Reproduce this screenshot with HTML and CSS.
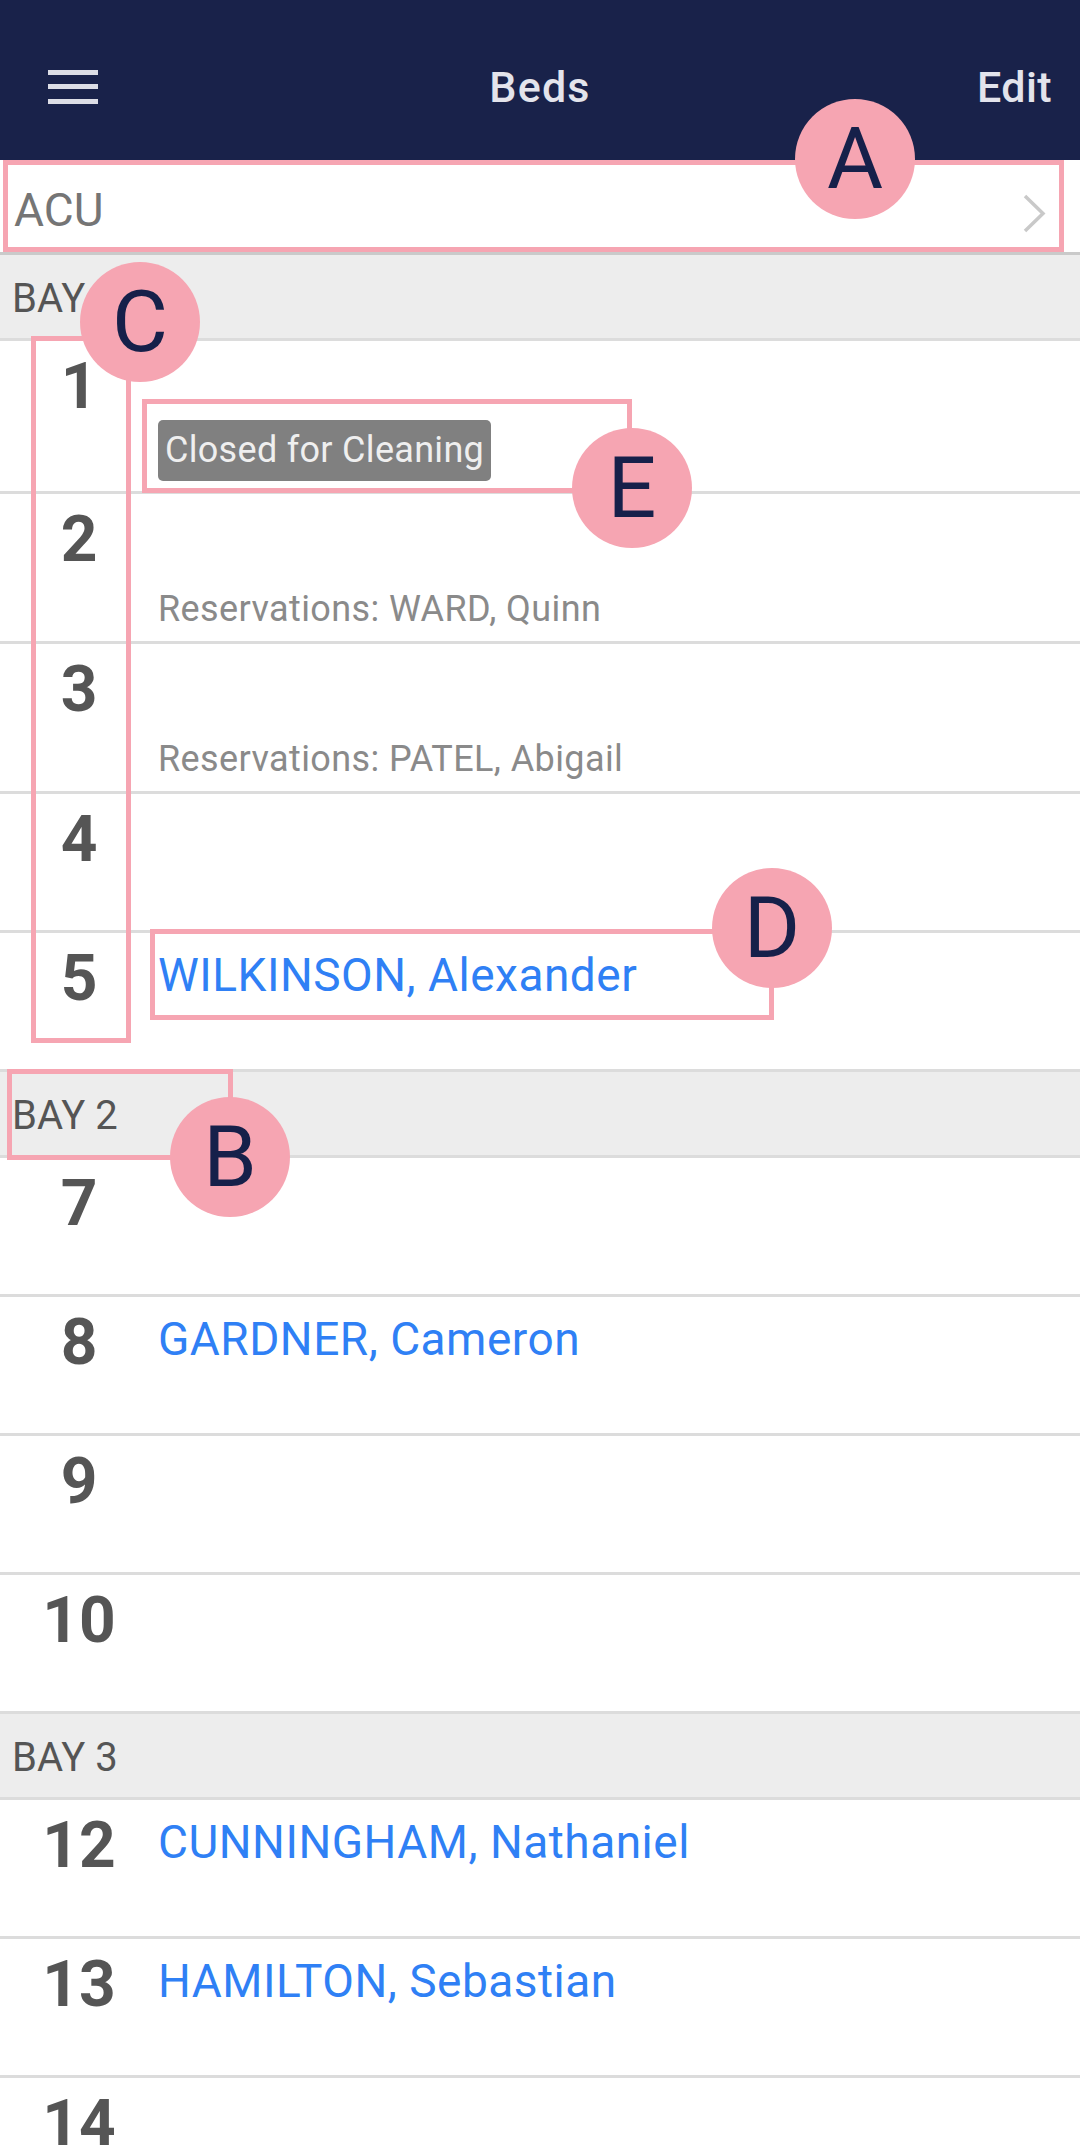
FILE: index.html
```html
<!DOCTYPE html>
<html lang="en">
<head>
<meta charset="utf-8">
<title>Beds</title>
<link rel="stylesheet" href="styles.css">
</head>
<body>
<header class="topbar">
  <div class="tb-left">
    <svg class="menu" width="50" height="34" viewBox="0 0 50 34"><rect x="0" y="0" width="50" height="5"/><rect x="0" y="14" width="50" height="5"/><rect x="0" y="29" width="50" height="5"/></svg>
  </div>
  <div class="tb-title">Beds</div>
  <div class="tb-right">Edit</div>
</header>

<div class="unit-row">
  <span class="unit">ACU</span>
  <svg class="chev" width="26" height="40" viewBox="0 0 26 40"><polyline points="3,2 21,19.5 3,37" fill="none" stroke="#c9c9c9" stroke-width="3.5"/></svg>
</div>

<section class="bay">
  <div class="bay-head">BAY 1</div>
  <div class="bed"><div class="num">1</div><div class="info"><div class="name"></div><span class="status">Closed for Cleaning</span></div></div>
  <div class="bed"><div class="num">2</div><div class="info"><div class="name"></div><div class="res">Reservations: WARD, Quinn</div></div></div>
  <div class="bed"><div class="num">3</div><div class="info"><div class="name"></div><div class="res">Reservations: PATEL, Abigail</div></div></div>
  <div class="bed"><div class="num">4</div><div class="info"><div class="name"></div></div></div>
  <div class="bed"><div class="num">5</div><div class="info"><div class="name">WILKINSON, Alexander</div></div></div>
</section>

<section class="bay">
  <div class="bay-head">BAY 2</div>
  <div class="bed"><div class="num">7</div><div class="info"><div class="name"></div></div></div>
  <div class="bed"><div class="num">8</div><div class="info"><div class="name">GARDNER, Cameron</div></div></div>
  <div class="bed"><div class="num">9</div><div class="info"><div class="name"></div></div></div>
  <div class="bed"><div class="num">10</div><div class="info"><div class="name"></div></div></div>
</section>

<section class="bay">
  <div class="bay-head">BAY 3</div>
  <div class="bed"><div class="num">12</div><div class="info"><div class="name">CUNNINGHAM, Nathaniel</div></div></div>
  <div class="bed"><div class="num">13</div><div class="info"><div class="name">HAMILTON, Sebastian</div></div></div>
  <div class="bed"><div class="num">14</div><div class="info"><div class="name"></div></div></div>
</section>

<div class="annot-box box-a"></div>
<div class="annot-box box-c"></div>
<div class="annot-box box-e"></div>
<div class="annot-box box-d"></div>
<div class="annot-box box-b"></div>
<div class="annot-dot dot-a">A</div>
<div class="annot-dot dot-c">C</div>
<div class="annot-dot dot-e">E</div>
<div class="annot-dot dot-d">D</div>
<div class="annot-dot dot-b">B</div>
</body>
</html>
```
FILE: styles.css
```css
* { box-sizing: border-box; }
html, body { margin: 0; padding: 0; }
body {
  width: 1080px;
  height: 2148px;
  overflow: hidden;
  position: relative;
  background: #ffffff;
  font-family: Roboto, "Noto Sans", "Liberation Sans", sans-serif;
}

.topbar {
  height: 160px;
  background: #19224a;
  display: grid;
  grid-template-columns: 1fr auto 1fr;
  padding-top: 14px;
  line-height: 146px;
  font-size: 43px;
  font-weight: 500;
  color: #e3e4ec;
}
.tb-left { display: flex; align-items: center; padding-left: 48px; }
.tb-title { letter-spacing: 1.2px; }
.tb-right { text-align: right; padding-right: 28px; letter-spacing: 0.4px; }
.menu { display: block; fill: #dcdde6; }

.unit-row {
  height: 95px;
  border-bottom: 3px solid #cacaca;
  display: flex;
  align-items: flex-start;
  justify-content: space-between;
  padding: 8px 32px 0 14px;
}
.unit { font-size: 46px; line-height: 84px; color: #757575; }
.chev { display: block; margin-top: 26px; }

.bay-head {
  height: 86px;
  background: #ededed;
  border-bottom: 3px solid #dcdcdc;
  padding: 4px 12px 0;
  font-size: 40px;
  line-height: 79px;
  color: #555555;
}

.bed {
  display: grid;
  grid-template-columns: 158px 1fr;
  min-height: 139px;
  border-bottom: 3px solid #dcdcdc;
  padding: 14px 0 10px;
}
.num {
  text-align: center;
  font-size: 64px;
  font-weight: 700;
  line-height: 64px;
  color: #555555;
}
.info { display: flex; flex-direction: column; align-items: flex-start; }
.name { height: 56px; line-height: 56px; font-size: 46px; letter-spacing: 0.5px; color: #2f80f5; white-space: nowrap; }
.res { margin-top: 24px; font-size: 36px; line-height: 43px; letter-spacing: 0.4px; color: #8a8a8a; }
.status {
  margin-top: 9px;
  height: 61px;
  line-height: 61px;
  padding: 0 7px;
  background: #808080;
  color: #efefef;
  font-size: 36px;
  letter-spacing: 0.3px;
  border-radius: 5px;
}

.annot-box { position: absolute; border: 5px solid #f6a5b2; }
.box-a { left: 3px; top: 160px; width: 1061px; height: 92px; }
.box-c { left: 31px; top: 336px; width: 100px; height: 707px; }
.box-e { left: 142px; top: 399px; width: 490px; height: 94px; }
.box-d { left: 150px; top: 929px; width: 624px; height: 91px; }
.box-b { left: 7px; top: 1069px; width: 226px; height: 91px; }

.annot-dot {
  position: absolute;
  width: 120px;
  height: 120px;
  border-radius: 50%;
  background: #f6a5b2;
  color: #16204a;
  font-size: 86px;
  line-height: 120px;
  text-align: center;
}
.dot-a { left: 795px; top: 99px; }
.dot-c { left: 80px; top: 262px; }
.dot-e { left: 572px; top: 428px; }
.dot-d { left: 712px; top: 868px; }
.dot-b { left: 170px; top: 1097px; }
```
